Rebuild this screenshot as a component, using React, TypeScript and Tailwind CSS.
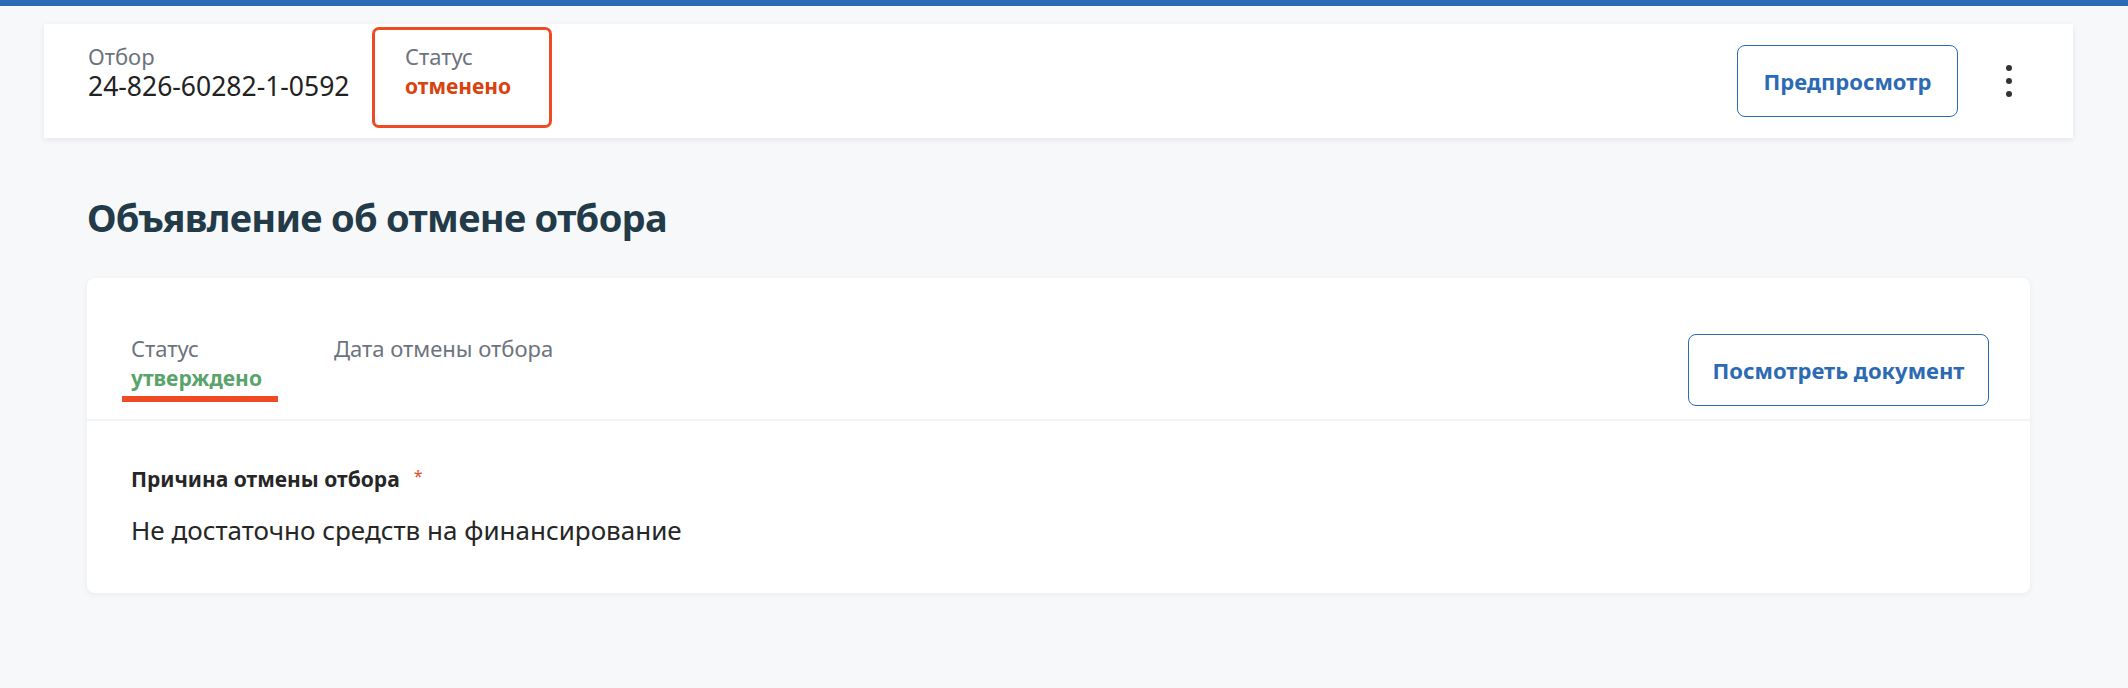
const font = { fontFamily: '"Noto Sans", "Open Sans", sans-serif' };

function Field({ label, children }: { label: string; children: React.ReactNode }) {
  return (
    <div className="flex flex-col">
      <span className="text-[22px] leading-[28px] text-[#6d737d]">{label}</span>
      {children}
    </div>
  );
}

export default function App() {
  return (
    <div className="min-h-[688px] bg-[#f7f8fa] text-[#222]" style={font}>
      <div className="h-[6px] bg-[#2b6ab6]" />

      {/* Top bar with selection number and status */}
      <header className="mx-[44px] mr-[55px] mt-[18px] flex h-[114px] items-start bg-white pl-[44px] pr-[52px] shadow-[0_2px_6px_rgba(20,30,50,0.08)]">
        <div className="mt-[18px] w-[284px]">
          <Field label="Отбор">
            <span className="text-[26.5px] leading-[32px] text-[#222]">24-826-60282-1-0592</span>
          </Field>
        </div>
        <div className="mt-[3px] h-[101px] w-[180px] rounded-[7px] border-[3px] border-[#f04a24] pl-[30px] pt-[12px]">
          <Field label="Статус">
            <span className="text-[21px] font-bold leading-[32px] text-[#d8420f]">отменено</span>
          </Field>
        </div>
        <div className="ml-auto flex h-full items-center gap-[39px]">
          <button className="h-[72px] w-[221px] rounded-[8px] border border-[#2c6ab4] text-[22px] font-bold text-[#2c6ab4]">
            Предпросмотр
          </button>
          <span className="flex w-[24px] flex-col items-center gap-[7px]">
            <span className="h-[6px] w-[6px] rounded-full bg-[#333]" />
            <span className="h-[6px] w-[6px] rounded-full bg-[#333]" />
            <span className="h-[6px] w-[6px] rounded-full bg-[#333]" />
          </span>
        </div>
      </header>

      <h1 className="ml-[87px] mt-[55px] text-[38px] font-bold leading-[48px] tracking-[-0.7px] text-[#233b48]">
        Объявление об отмене отбора
      </h1>

      <section className="ml-[87px] mr-[98px] mt-[37px] rounded-[8px] bg-white shadow-[0_2px_6px_rgba(20,30,50,0.06)]">
        <div className="flex items-start pl-[44px] pr-[41px] pb-[13px] pt-[56px]">
          <div className="w-[203px]">
            <Field label="Статус">
              <span className="text-[21px] font-bold leading-[32px] text-[#59a46a]">утверждено</span>
            </Field>
            <div className="-ml-[9px] mt-[2px] h-[6px] w-[156px] bg-[#f04a24]" />
          </div>
          <Field label="Дата отмены отбора">
            <span />
          </Field>
          <button className="ml-auto h-[72px] w-[301px] rounded-[8px] border border-[#2c6ab4] text-[22px] font-bold text-[#2c6ab4]">
            Посмотреть документ
          </button>
        </div>
        <div className="h-[2px] bg-[#f3f4f6]" />
        <div className="pl-[44px] pb-[46px] pt-[44px]">
          <div className="flex items-start text-[21px] font-bold leading-[28px] text-[#262626]">
            Причина отмены отбора
            <span className="ml-[14px] -mt-[3px] text-[16px] font-normal text-[#e04b2a]">*</span>
          </div>
          <p className="mt-[21px] text-[26px] leading-[33px] text-[#262626]">
            Не достаточно средств на финансирование
          </p>
        </div>
      </section>
    </div>
  );
}
